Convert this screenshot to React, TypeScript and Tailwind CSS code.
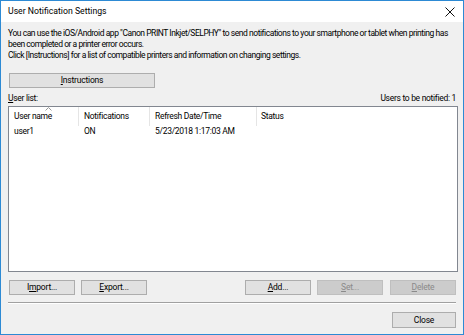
import React from 'react'

function Btn({ children, disabled, className = '' }: { children: React.ReactNode; disabled?: boolean; className?: string }) {
  return (
    <div
      className={
        'flex items-center justify-center h-[15px] border text-[8.5px] leading-none tracking-[-0.2px] ' +
        (disabled ? 'bg-[#cccccc] border-[#bfbfbf] text-[#8a8a8a] ' : 'bg-[#e1e1e1] border-[#adadad] text-black ') +
        className
      }
    >
      {children}
    </div>
  )
}

export default function App() {
  return (
    <div
      className="w-[464px] h-[335px] border border-[#2d8ad4] bg-[#f0f0f0] flex flex-col text-black overflow-hidden"
      style={{ fontFamily: 'Roboto, "Liberation Sans", Arial, sans-serif' }}
    >
      {/* title bar */}
      <div className="h-[21px] bg-white flex items-center justify-between pl-[7px] pr-[7px] shrink-0">
        <span className="text-[8.7px]">User Notification Settings</span>
        <svg width="10" height="10" viewBox="0 0 10 10" className="mr-[1px]">
          <path d="M0.5 0.5 L9.5 9.5 M9.5 0.5 L0.5 9.5" stroke="#111" strokeWidth="1" />
        </svg>
      </div>

      <div className="flex flex-col pl-[7px] pr-[6px] pt-[6px]">
        <div className="text-[8.5px] leading-[11px] tracking-[-0.45px] whitespace-nowrap">
          <div>You can use the iOS/Android app "Canon PRINT Inkjet/SELPHY" to send notifications to your smartphone or tablet when printing has</div>
          <div>been completed or a printer error occurs.</div>
          <div>Click [Instructions] for a list of compatible printers and information on changing settings.</div>
        </div>

        <Btn className="w-[146px] mt-[12px] ml-px">
          <span><u>I</u>nstructions</span>
        </Btn>

        <div className="flex justify-between text-[8.5px] leading-[12px] mt-[4px] tracking-[-0.3px]">
          <span>
            <u>U</u>ser list:
          </span>
          <span className="mr-px">Users to be notified: 1</span>
        </div>

        {/* list view */}
        <div className="mt-[2px] h-[166px] w-[450px] bg-white border border-[#828790] text-[8.5px] tracking-[-0.3px]">
          <div className="flex h-[19px] items-center">
            <div className="w-[70px] h-full flex items-center pl-[5px] border-r border-[#e5e5e5] relative">
              User name
              <svg width="7" height="4" viewBox="0 0 7 4" className="absolute left-[36px] top-[0px]">
                <path d="M0.5 3.5 L3.5 0.5 L6.5 3.5" stroke="#9a9a9a" fill="none" strokeWidth="1" />
              </svg>
            </div>
            <div className="w-[71px] h-full flex items-center pl-[5px] border-r border-[#e5e5e5]">Notifications</div>
            <div className="w-[107px] h-full flex items-center pl-[5px] border-r border-[#e5e5e5]">Refresh Date/Time</div>
            <div className="flex-1 h-full flex items-center pl-[4px]">Status</div>
          </div>
          <div className="flex h-[11px] items-center">
            <div className="w-[70px] pl-[5px]">user1</div>
            <div className="w-[71px] pl-[5px]">ON</div>
            <div className="w-[107px] pl-[5px]">5/23/2018 1:17:03 AM</div>
          </div>
        </div>

        <div className="flex mt-[8px] ml-px">
          <Btn className="w-[66px]">
            <span>I<u>m</u>port...</span>
          </Btn>
          <Btn className="w-[66px] ml-[6px]">
            <span><u>E</u>xport...</span>
          </Btn>
          <div className="flex-1" />
          <Btn className="w-[66px]">
            <span><u>A</u>dd...</span>
          </Btn>
          <Btn disabled className="w-[66px] ml-[6px]">
            <span><u>S</u>et...</span>
          </Btn>
          <Btn disabled className="w-[66px] ml-[7px] mr-px">
            <span><u>D</u>elete</span>
          </Btn>
        </div>

        <div className="mt-[7px] h-[2px] border-t border-[#a0a0a0] border-b border-b-white mr-px" />

        <div className="flex justify-end mt-[8px] mr-px">
          <Btn className="w-[64px] h-[16px]">Close</Btn>
        </div>
      </div>
    </div>
  )
}
